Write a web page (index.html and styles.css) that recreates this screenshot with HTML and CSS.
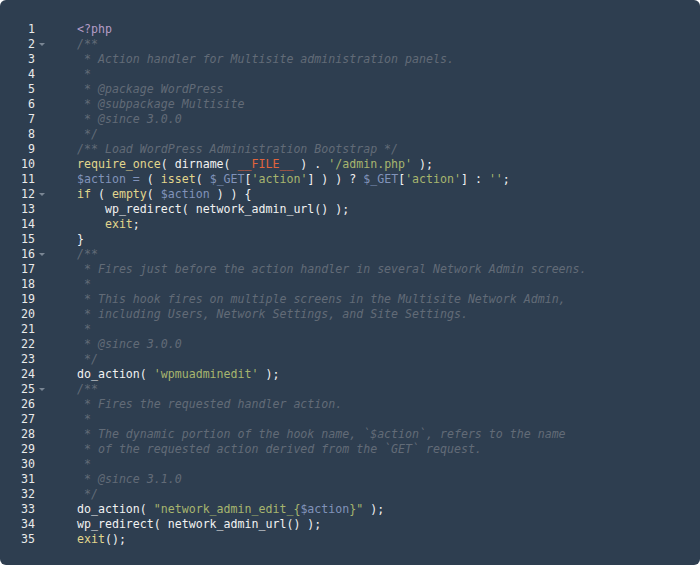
FILE: index.html
```html
<!DOCTYPE html>
<html>
<head>
<meta charset="utf-8">
<link rel="stylesheet" href="styles.css">
</head>
<body>
<div class="editor">
<div class="line"><span class="ln">1</span><span class="fold"></span><span class="code"><span class="tag">&lt;?php</span></span></div>
<div class="line"><span class="ln">2</span><span class="fold"><i class="arrow"></i></span><span class="code"><span class="cm">/**</span></span></div>
<div class="line"><span class="ln">3</span><span class="fold"></span><span class="code"><span class="cm"> * Action handler for Multisite administration panels.</span></span></div>
<div class="line"><span class="ln">4</span><span class="fold"></span><span class="code"><span class="cm"> *</span></span></div>
<div class="line"><span class="ln">5</span><span class="fold"></span><span class="code"><span class="cm"> * @package WordPress</span></span></div>
<div class="line"><span class="ln">6</span><span class="fold"></span><span class="code"><span class="cm"> * @subpackage Multisite</span></span></div>
<div class="line"><span class="ln">7</span><span class="fold"></span><span class="code"><span class="cm"> * @since 3.0.0</span></span></div>
<div class="line"><span class="ln">8</span><span class="fold"></span><span class="code"><span class="cm"> */</span></span></div>
<div class="line"><span class="ln">9</span><span class="fold"></span><span class="code"><span class="cm">/** Load WordPress Administration Bootstrap */</span></span></div>
<div class="line"><span class="ln">10</span><span class="fold"></span><span class="code"><span class="kw">require_once</span>( dirname( <span class="const">__FILE__</span> ) . <span class="str">'/admin.php'</span> );</span></div>
<div class="line"><span class="ln">11</span><span class="fold"></span><span class="code"><span class="var">$action =</span> ( <span class="kw">isset</span>( <span class="var">$_GET</span>[<span class="str">'action'</span>] ) ) ? <span class="var">$_GET</span>[<span class="str">'action'</span>] : <span class="str">''</span>;</span></div>
<div class="line"><span class="ln">12</span><span class="fold"><i class="arrow"></i></span><span class="code"><span class="kw">if</span> ( <span class="kw">empty</span>( <span class="var">$action</span> ) ) {</span></div>
<div class="line"><span class="ln">13</span><span class="fold"></span><span class="code">    wp_redirect( network_admin_url() );</span></div>
<div class="line"><span class="ln">14</span><span class="fold"></span><span class="code">    <span class="kw">exit</span>;</span></div>
<div class="line"><span class="ln">15</span><span class="fold"></span><span class="code">}</span></div>
<div class="line"><span class="ln">16</span><span class="fold"><i class="arrow"></i></span><span class="code"><span class="cm">/**</span></span></div>
<div class="line"><span class="ln">17</span><span class="fold"></span><span class="code"><span class="cm"> * Fires just before the action handler in several Network Admin screens.</span></span></div>
<div class="line"><span class="ln">18</span><span class="fold"></span><span class="code"><span class="cm"> *</span></span></div>
<div class="line"><span class="ln">19</span><span class="fold"></span><span class="code"><span class="cm"> * This hook fires on multiple screens in the Multisite Network Admin,</span></span></div>
<div class="line"><span class="ln">20</span><span class="fold"></span><span class="code"><span class="cm"> * including Users, Network Settings, and Site Settings.</span></span></div>
<div class="line"><span class="ln">21</span><span class="fold"></span><span class="code"><span class="cm"> *</span></span></div>
<div class="line"><span class="ln">22</span><span class="fold"></span><span class="code"><span class="cm"> * @since 3.0.0</span></span></div>
<div class="line"><span class="ln">23</span><span class="fold"></span><span class="code"><span class="cm"> */</span></span></div>
<div class="line"><span class="ln">24</span><span class="fold"></span><span class="code">do_action( <span class="str">'wpmuadminedit'</span> );</span></div>
<div class="line"><span class="ln">25</span><span class="fold"><i class="arrow"></i></span><span class="code"><span class="cm">/**</span></span></div>
<div class="line"><span class="ln">26</span><span class="fold"></span><span class="code"><span class="cm"> * Fires the requested handler action.</span></span></div>
<div class="line"><span class="ln">27</span><span class="fold"></span><span class="code"><span class="cm"> *</span></span></div>
<div class="line"><span class="ln">28</span><span class="fold"></span><span class="code"><span class="cm"> * The dynamic portion of the hook name, `$action`, refers to the name</span></span></div>
<div class="line"><span class="ln">29</span><span class="fold"></span><span class="code"><span class="cm"> * of the requested action derived from the `GET` request.</span></span></div>
<div class="line"><span class="ln">30</span><span class="fold"></span><span class="code"><span class="cm"> *</span></span></div>
<div class="line"><span class="ln">31</span><span class="fold"></span><span class="code"><span class="cm"> * @since 3.1.0</span></span></div>
<div class="line"><span class="ln">32</span><span class="fold"></span><span class="code"><span class="cm"> */</span></span></div>
<div class="line"><span class="ln">33</span><span class="fold"></span><span class="code">do_action( <span class="str">"network_admin_edit_{</span><span class="var">$action</span><span class="str">}"</span> );</span></div>
<div class="line"><span class="ln">34</span><span class="fold"></span><span class="code">wp_redirect( network_admin_url() );</span></div>
<div class="line"><span class="ln">35</span><span class="fold"></span><span class="code"><span class="kw">exit</span>();</span></div>
</div>
</body>
</html>
```
FILE: styles.css
```css
html, body {
  margin: 0;
  padding: 0;
  background: #ffffff;
}
.editor {
  width: 700px;
  height: 565px;
  box-sizing: border-box;
  background: #2e3e50;
  border-radius: 6px;
  padding-top: 22px;
  font-family: "DejaVu Sans Mono", "Liberation Mono", monospace;
  font-size: 11.6px;
  line-height: 15px;
  color: #f2f2f2;
}
.line {
  display: flex;
  height: 15px;
  white-space: pre;
}
.ln {
  width: 35px;
  text-align: right;
  color: #eaeaea;
  flex: none;
}
.fold {
  width: 42px;
  flex: none;
  position: relative;
}
.arrow {
  position: absolute;
  left: 4px;
  top: 6px;
  width: 0;
  height: 0;
  border-left: 3px solid transparent;
  border-right: 3px solid transparent;
  border-top: 3px solid #7a8694;
}
.code {
  flex: 1;
}
.cm {
  color: #626b77;
  font-style: italic;
}
.tag {
  color: #b49cc6;
}
.kw {
  color: #e2d68c;
}
.str {
  color: #a7b56e;
}
.var {
  color: #8193ba;
}
.const {
  color: #e0643c;
}
```
